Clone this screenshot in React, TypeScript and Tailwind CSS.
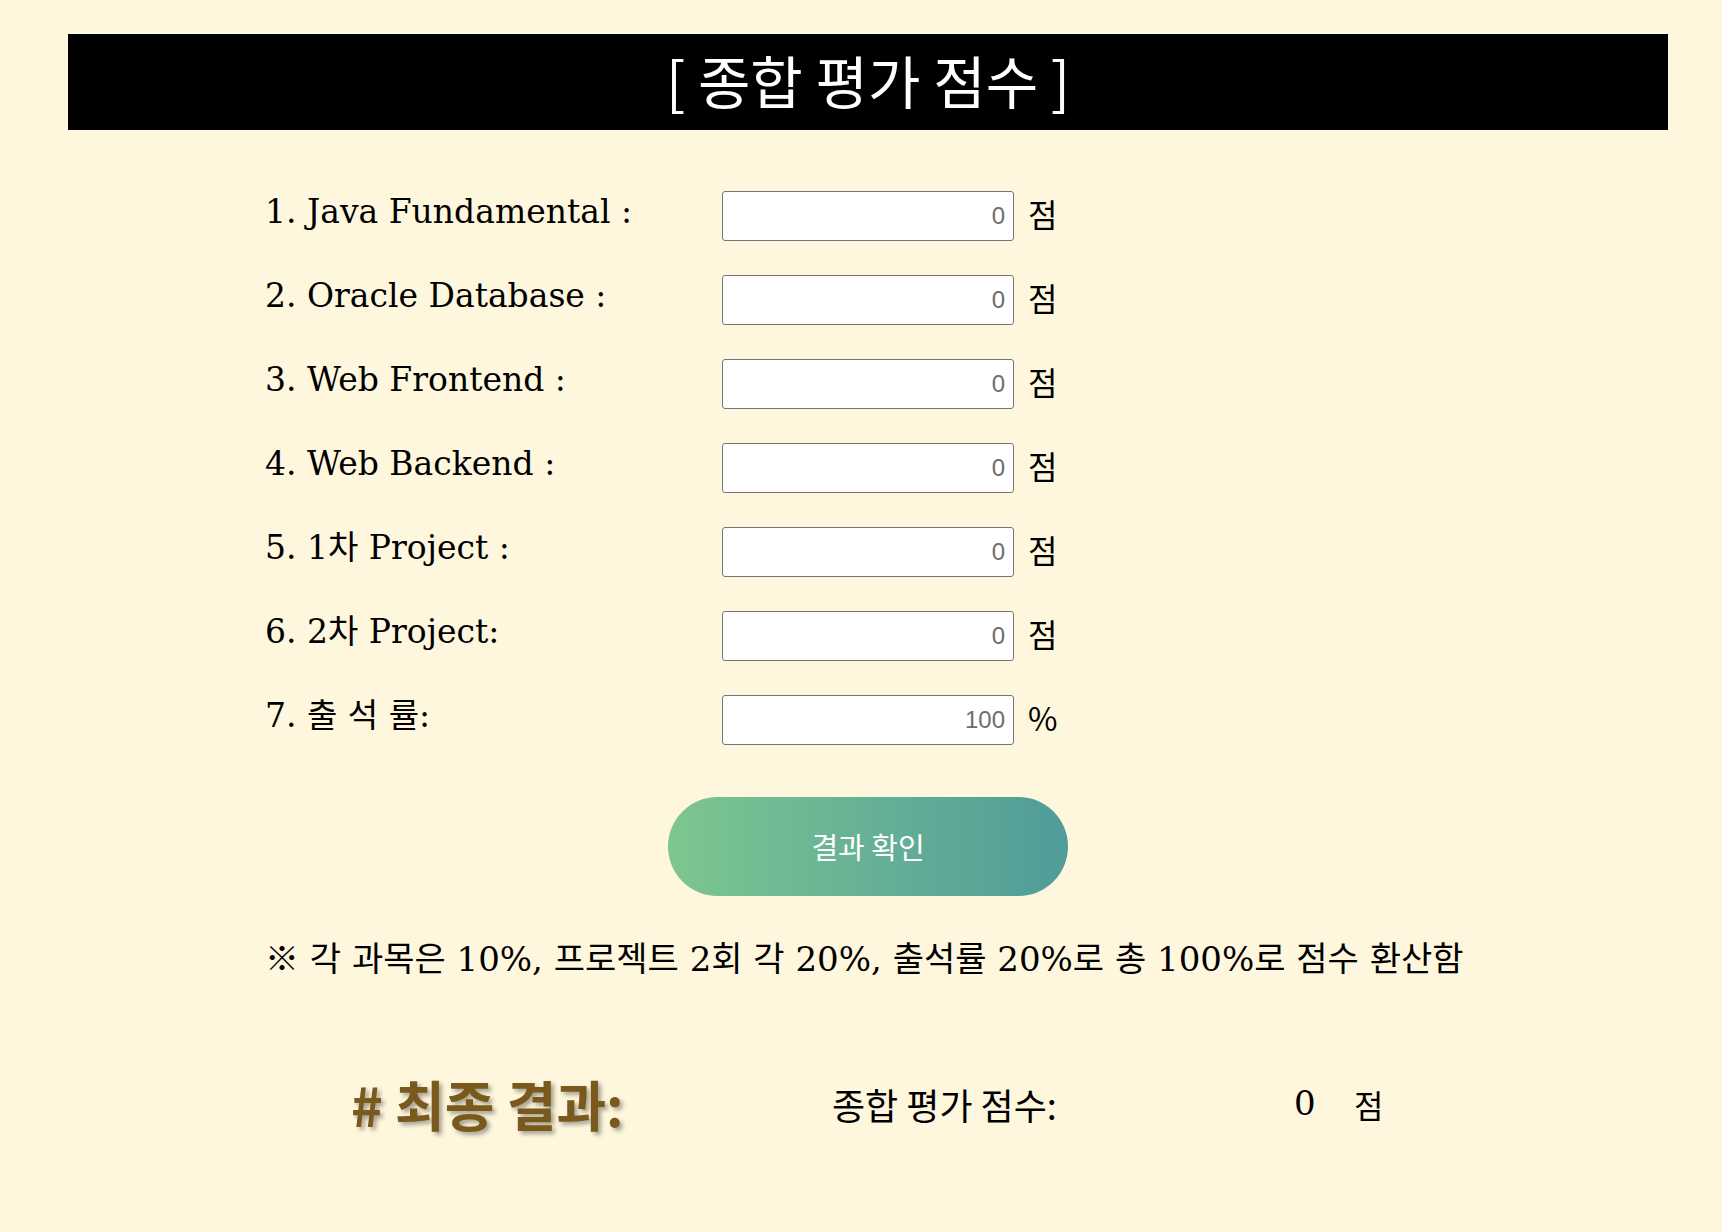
const rows = [
  { label: "1. Java Fundamental :", value: "0", unit: "점" },
  { label: "2. Oracle Database :", value: "0", unit: "점" },
  { label: "3. Web Frontend :", value: "0", unit: "점" },
  { label: "4. Web Backend :", value: "0", unit: "점" },
  { label: "5. 1차 Project :", value: "0", unit: "점" },
  { label: "6. 2차 Project:", value: "0", unit: "점" },
  { label: "7. 출 석 률:", value: "100", unit: "%" },
];

const serif = "font-['DejaVu_Serif','Noto_Sans_CJK_KR',serif]";
const sans = "font-['Noto_Sans_CJK_KR','Liberation_Sans',sans-serif]";

export default function App() {
  return (
    <div className={`min-h-[1232px] bg-[#fef7de] pt-[34px] pl-[68px] text-black ${serif}`}>
      <div className="w-[1600px]">
        {/* 제목 */}
        <div className={`flex h-[96px] items-center justify-center bg-black text-[57px] text-white ${sans}`}>
          <span className="-mt-[4px]">[ 종합 평가 점수 ]</span>
        </div>

        {/* 입력 폼 */}
        <div className="mt-[61px] flex flex-col gap-[34px] pl-[197px]">
          {rows.map((r) => (
            <div key={r.label} className="flex h-[50px] items-center">
              <div className="-mt-[8px] w-[457px] text-[33px]">{r.label}</div>
              <input
                type="text"
                defaultValue={r.value}
                className="h-[50px] w-[292px] rounded-[3px] border border-[#767676] bg-white px-[8px] text-right font-['Liberation_Sans',sans-serif] text-[24px] text-[#6d6d6d] outline-none"
              />
              <span className={`-mt-[6px] ml-[14px] text-[32px] ${sans}`}>{r.unit}</span>
            </div>
          ))}
        </div>

        {/* 버튼 */}
        <div className="mt-[52px] flex justify-center">
          <button
            type="button"
            className={`h-[99px] w-[400px] rounded-full bg-gradient-to-r from-[#7ec690] to-[#4f9c99] text-[29px] text-white ${sans}`}
          >
            결과 확인
          </button>
        </div>

        {/* 안내 */}
        <div className="mt-[38px] pl-[197px] text-[34px]">
          ※ 각 과목은 10%, 프로젝트 2회 각 20%, 출석률 20%로 총 100%로 점수 환산함
        </div>

        {/* 최종 결과 */}
        <div className="mt-[78px] flex items-center">
          <div
            className={`ml-[283px] w-[481px] text-[54px] font-bold text-[#7a5a1c] [text-shadow:3px_3px_4px_rgba(0,0,0,0.35)] ${sans}`}
          >
            # 최종 결과:
          </div>
          <div className={`w-[462px] text-[36px] ${sans}`}>종합 평가 점수:</div>
          <div className="w-[60px] text-[34px]">0</div>
          <div className={`text-[32px] ${sans}`}>점</div>
        </div>
      </div>
    </div>
  );
}
